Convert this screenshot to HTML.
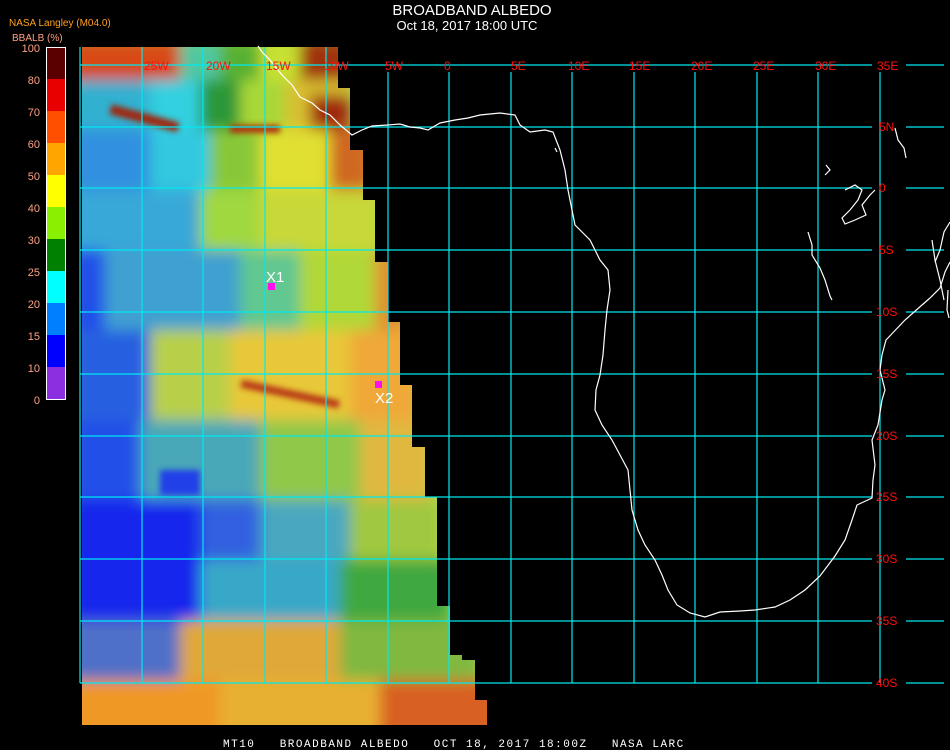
<!DOCTYPE html>
<html><head><meta charset="utf-8"><style>
html,body{margin:0;padding:0;background:#000;width:950px;height:750px;overflow:hidden}
svg{display:block}
text{font-family:"Liberation Sans",sans-serif}
</style></head><body>
<svg width="950" height="750" viewBox="0 0 950 750" xmlns="http://www.w3.org/2000/svg">
<defs>
<clipPath id="img">
<polygon points="82,47 338,47 338,88 350,88 350,150 363,150 363,200 375,200 375,262 388,262 388,322 400,322 400,385 412,385 412,447 425,447 425,497 437,497 437,606 450,606 450,655 462,655 462,660 475,660 475,700 487,700 487,725 82,725"/>
</clipPath>
<filter id="bl" x="-20%" y="-20%" width="140%" height="140%"><feGaussianBlur stdDeviation="7"/></filter>
<filter id="bs" x="-20%" y="-20%" width="140%" height="140%"><feGaussianBlur stdDeviation="3"/></filter>
</defs>
<rect width="950" height="750" fill="#000"/>
<g clip-path="url(#img)">
<rect x="80" y="40" width="420" height="700" fill="#b0d848"/>
<g filter="url(#bl)">
<!-- top -->
<rect x="70" y="40" width="110" height="40" fill="#d84818"/>
<rect x="180" y="40" width="40" height="40" fill="#50c8a0"/>
<rect x="220" y="40" width="40" height="40" fill="#58b030"/>
<rect x="260" y="40" width="40" height="40" fill="#c8e030"/>
<rect x="300" y="40" width="50" height="40" fill="#a03010"/>
<rect x="70" y="80" width="80" height="50" fill="#30b0d0"/>
<rect x="150" y="80" width="50" height="50" fill="#30d0e0"/>
<rect x="200" y="80" width="40" height="50" fill="#2a9838"/>
<rect x="240" y="80" width="45" height="50" fill="#a8d838"/>
<rect x="285" y="80" width="65" height="50" fill="#d8c030"/>
<rect x="310" y="95" width="40" height="40" fill="#a02810"/>
<rect x="70" y="130" width="80" height="60" fill="#3090e0"/>
<rect x="150" y="130" width="60" height="60" fill="#30c8e0"/>
<rect x="210" y="130" width="50" height="60" fill="#88c838"/>
<rect x="260" y="130" width="70" height="60" fill="#e0e030"/>
<rect x="330" y="130" width="40" height="60" fill="#d06820"/>
<rect x="70" y="190" width="130" height="60" fill="#38a8d8"/>
<rect x="200" y="190" width="60" height="60" fill="#a0d840"/>
<rect x="260" y="190" width="120" height="60" fill="#c8d838"/>
<rect x="70" y="250" width="35" height="80" fill="#2050e8"/>
<rect x="105" y="250" width="135" height="80" fill="#40a0d0"/>
<rect x="240" y="250" width="60" height="80" fill="#60c890"/>
<rect x="300" y="250" width="75" height="80" fill="#b0d838"/>
<rect x="375" y="250" width="30" height="80" fill="#e09030"/>
<!-- middle -->
<rect x="70" y="330" width="80" height="90" fill="#2860e0"/>
<rect x="150" y="330" width="80" height="90" fill="#b8d048"/>
<rect x="230" y="330" width="120" height="90" fill="#e8c838"/>
<rect x="350" y="330" width="70" height="90" fill="#f0a838"/>
<rect x="70" y="420" width="70" height="80" fill="#2050e8"/>
<rect x="140" y="420" width="120" height="80" fill="#48a8b8"/>
<rect x="260" y="420" width="100" height="80" fill="#90c848"/>
<rect x="360" y="420" width="70" height="80" fill="#e0b840"/>
<rect x="70" y="500" width="130" height="130" fill="#1428ec"/>
<rect x="200" y="500" width="60" height="60" fill="#3060e0"/>
<rect x="260" y="500" width="90" height="60" fill="#48a8c0"/>
<rect x="350" y="500" width="90" height="60" fill="#a0c840"/>
<rect x="200" y="560" width="140" height="60" fill="#38a8c8"/>
<rect x="340" y="560" width="110" height="60" fill="#40a840"/>
<rect x="70" y="620" width="110" height="60" fill="#5070c8"/>
<rect x="180" y="620" width="160" height="60" fill="#e0a838"/>
<rect x="340" y="620" width="140" height="60" fill="#80b840"/>
<rect x="70" y="680" width="150" height="60" fill="#f09828"/>
<rect x="220" y="680" width="160" height="60" fill="#e8b030"/>
<rect x="380" y="680" width="120" height="60" fill="#d86020"/>
</g>
<g filter="url(#bs)">
<rect x="110" y="112" width="70" height="10" fill="#a02810" transform="rotate(15 140 115)"/>
<rect x="230" y="125" width="50" height="8" fill="#b03010"/>
<rect x="240" y="390" width="100" height="8" fill="#b83818" transform="rotate(12 290 395)"/>
<rect x="160" y="470" width="40" height="25" fill="#2040e8"/>
</g>
</g>
<!-- grid -->
<g stroke="#00e8f0" stroke-width="1.2">
<line x1="80" y1="65" x2="872" y2="65"/><line x1="906" y1="65" x2="944" y2="65"/>
<line x1="80" y1="127" x2="872" y2="127"/><line x1="906" y1="127" x2="944" y2="127"/>
<line x1="80" y1="188" x2="872" y2="188"/><line x1="906" y1="188" x2="944" y2="188"/>
<line x1="80" y1="250" x2="872" y2="250"/><line x1="906" y1="250" x2="944" y2="250"/>
<line x1="80" y1="312" x2="872" y2="312"/><line x1="906" y1="312" x2="944" y2="312"/>
<line x1="80" y1="374" x2="872" y2="374"/><line x1="906" y1="374" x2="944" y2="374"/>
<line x1="80" y1="436" x2="872" y2="436"/><line x1="906" y1="436" x2="944" y2="436"/>
<line x1="80" y1="497" x2="872" y2="497"/><line x1="906" y1="497" x2="944" y2="497"/>
<line x1="80" y1="559" x2="872" y2="559"/><line x1="906" y1="559" x2="944" y2="559"/>
<line x1="80" y1="621" x2="872" y2="621"/><line x1="906" y1="621" x2="944" y2="621"/>
<line x1="80" y1="683" x2="872" y2="683"/><line x1="906" y1="683" x2="944" y2="683"/>
<line x1="80" y1="47" x2="80" y2="683"/>
<line x1="142" y1="47" x2="142" y2="683"/><line x1="203" y1="47" x2="203" y2="683"/>
<line x1="265" y1="47" x2="265" y2="683"/><line x1="326" y1="47" x2="326" y2="683"/>
<line x1="388" y1="72" x2="388" y2="683"/><line x1="449" y1="72" x2="449" y2="683"/>
<line x1="511" y1="72" x2="511" y2="683"/><line x1="572" y1="72" x2="572" y2="683"/>
<line x1="634" y1="72" x2="634" y2="683"/><line x1="695" y1="72" x2="695" y2="683"/>
<line x1="757" y1="72" x2="757" y2="683"/><line x1="818" y1="72" x2="818" y2="683"/>
<line x1="880" y1="72" x2="880" y2="683"/>
</g>
<!-- coastline -->
<g fill="none" stroke="#fff" stroke-width="1.2">
<polyline points="258,46 262,52 270,60 282,75 292,85 300,97 312,103 320,110 330,115 340,125 352,135 362,130 372,126 388,125 400,124 410,127 420,128 428,130 440,123 455,120 468,118 480,115 500,113 515,115 520,125 530,132 545,130 553,132 560,150 565,170 568,190 572,210 575,225 590,240 600,260 608,270 610,290 607,310 605,330 603,355 600,375 596,390 595,410 602,425 612,440 620,455 628,470 630,490 632,510 638,530 645,545 655,560 662,575 668,590 677,605 690,613 705,617 720,612 740,611 755,610 775,607 790,600 805,590 820,576 835,556 845,540 852,520 857,505 872,498 873,480 875,465 872,440 878,425 882,400 885,390 880,370 882,355 886,340 905,320 922,305 930,298 940,288 945,272 950,262"/>
<polyline points="950,222 944,232 940,250 935,262"/>
<polyline points="895,128 898,140 904,148 906,158"/>
<polyline points="845,190 855,185 862,190 858,200 850,210 842,218 845,224 855,220 866,215 862,205 870,195 875,190"/>
<polyline points="808,232 812,245 812,255 820,268 825,280 830,296 832,300"/>
<polyline points="932,240 935,260 940,280 944,300"/>
<polyline points="948,290 947,310 949,318"/>
<polyline points="555,148 557,152"/>
<polyline points="826,165 830,170 825,175"/>
</g>
<!-- markers -->
<rect x="268" y="283" width="7" height="7" fill="#ff10f0"/>
<text x="266" y="282" fill="#fff" font-size="15">X1</text>
<rect x="375" y="381" width="7" height="7" fill="#ff10f0"/>
<text x="375" y="403" fill="#fff" font-size="15">X2</text>
<!-- top labels -->
<g fill="#ff1010" font-size="12">
<text x="144" y="70">25W</text>
<text x="206" y="70">20W</text><text x="266" y="70">15W</text><text x="324" y="70">10W</text>
<text x="385" y="70">5W</text><text x="444" y="70">0</text><text x="511" y="70">5E</text>
<text x="568" y="70">10E</text><text x="629" y="70">15E</text><text x="691" y="70">20E</text>
<text x="753" y="70">25E</text><text x="815" y="70">30E</text><text x="877" y="70">35E</text>
<text x="879" y="131">5N</text><text x="879" y="192">0</text><text x="879" y="254">5S</text>
<text x="876" y="316">10S</text><text x="876" y="378">15S</text><text x="876" y="440">20S</text>
<text x="876" y="501">25S</text><text x="876" y="563">30S</text><text x="876" y="625">35S</text>
<text x="876" y="687">40S</text>
</g>
<!-- titles -->
<text x="472" y="15" fill="#fff" font-size="15" text-anchor="middle">BROADBAND ALBEDO</text>
<text x="467" y="30" fill="#fff" font-size="13" text-anchor="middle">Oct 18, 2017 18:00 UTC</text>
<text x="223" y="747" fill="#fff" font-size="11" style="font-family:'Liberation Mono',monospace" letter-spacing="1.5" xml:space="preserve">MT10   BROADBAND ALBEDO   OCT 18, 2017 18:00Z   NASA LARC</text>
<!-- legend -->
<text x="9" y="26" fill="#ffa020" font-size="10">NASA Langley (M04.0)</text>
<text x="12" y="41" fill="#ffa080" font-size="10">BBALB (%)</text>
<rect x="46" y="47" width="19" height="32" fill="#5a0000"/>
<rect x="46" y="79" width="19" height="32" fill="#e80000"/>
<rect x="46" y="111" width="19" height="32" fill="#ff5000"/>
<rect x="46" y="143" width="19" height="32" fill="#ffa500"/>
<rect x="46" y="175" width="19" height="32" fill="#ffff00"/>
<rect x="46" y="207" width="19" height="32" fill="#88f000"/>
<rect x="46" y="239" width="19" height="32" fill="#008000"/>
<rect x="46" y="271" width="19" height="32" fill="#00ffff"/>
<rect x="46" y="303" width="19" height="32" fill="#0080ff"/>
<rect x="46" y="335" width="19" height="32" fill="#0000ff"/>
<rect x="46" y="367" width="19" height="32" fill="#8a30e0"/>
<rect x="46.5" y="47.5" width="19" height="352" fill="none" stroke="#fff" stroke-width="1"/>
<g fill="#ffa080" font-size="11" text-anchor="end">
<text x="40" y="52">100</text><text x="40" y="84">80</text><text x="40" y="116">70</text>
<text x="40" y="148">60</text><text x="40" y="180">50</text><text x="40" y="212">40</text>
<text x="40" y="244">30</text><text x="40" y="276">25</text><text x="40" y="308">20</text>
<text x="40" y="340">15</text><text x="40" y="372">10</text><text x="40" y="404">0</text>
</g>
</svg>
</body></html>
